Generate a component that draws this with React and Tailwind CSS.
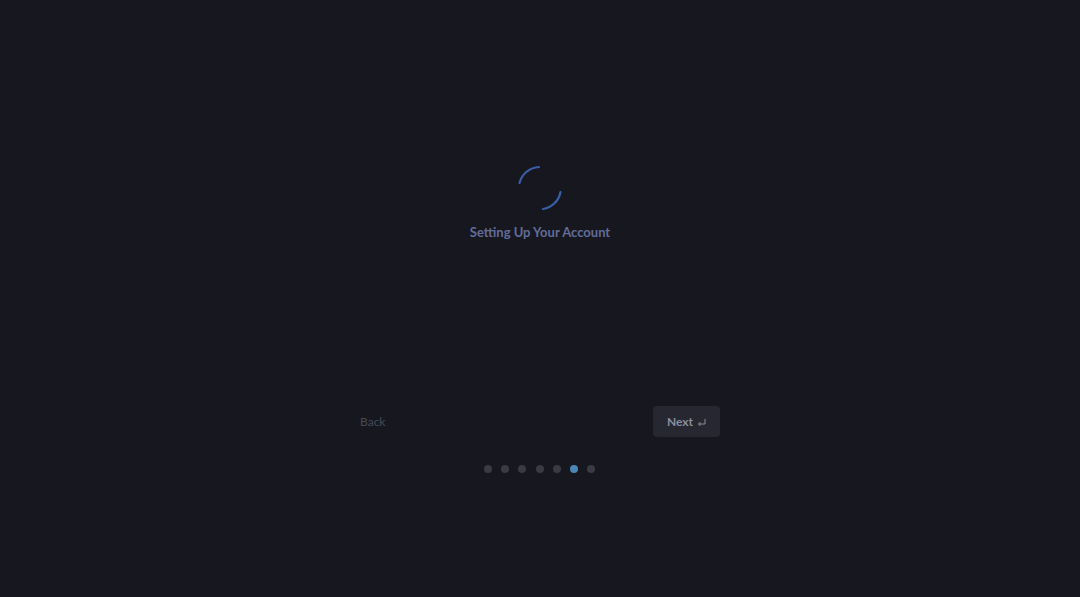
const App = () => {
  const steps = [0, 1, 2, 3, 4, 5, 6];
  const active = 5;

  return (
    <div className="min-h-[597px] w-full bg-[#17171f] font-['Lato','Noto_Sans',sans-serif] flex flex-col items-center">
      {/* Loading state */}
      <div className="mt-[165px] flex flex-col items-center">
        <svg className="w-[46px] h-[46px]" viewBox="0 0 46 46" fill="none">
          <path d="M22 2 A21 21 0 0 0 2.5 18" stroke="#3a5ea8" strokeWidth="2.2" strokeLinecap="round" />
          <path d="M43.5 27 A21 21 0 0 1 26 44" stroke="#3a5ea8" strokeWidth="2.2" strokeLinecap="round" />
        </svg>
        <div className="mt-[15px] text-[13px] font-bold text-[#626c98] leading-none">
          Setting Up Your Account
        </div>
      </div>

      {/* Nav buttons */}
      <div className="mt-[167px] w-[360px] flex items-center justify-between">
        <button className="text-[12px] text-[#474955] leading-none">Back</button>
        <button className="h-[31px] pl-[14px] pr-[14px] rounded-[4px] bg-[#262731] text-[12px] font-bold text-[#8b8e9b] flex items-center gap-[4px]">
          Next
          <svg className="w-[9px] h-[9px] mt-[1px]" viewBox="0 0 9 9" fill="none">
            <path d="M8 1 V6 H1.5 M3.5 4 L1.5 6 L3.5 8" stroke="#8b8e9b" strokeWidth="1" />
          </svg>
        </button>
      </div>

      {/* Step dots */}
      <div className="mt-[28px] ml-[-1px] flex items-center gap-[9.3px]">
        {steps.map((s) => (
          <div
            key={s}
            className={`w-[8px] h-[8px] rounded-full ${s === active ? 'bg-[#4b87b4]' : 'bg-[#393a43]'}`}
          />
        ))}
      </div>
    </div>
  );
};

export default App;
